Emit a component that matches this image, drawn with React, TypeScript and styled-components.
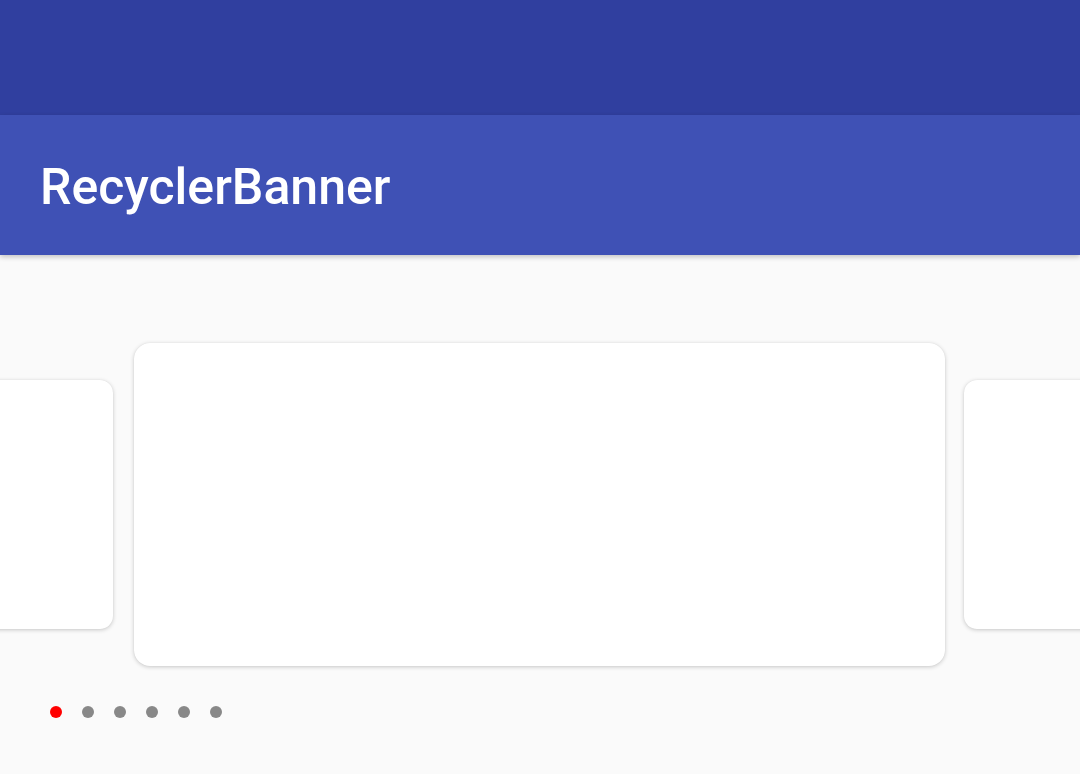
import React from 'react';
import styled, { createGlobalStyle } from 'styled-components';

const GlobalStyle = createGlobalStyle`
    html, body {
        margin: 0;
        padding: 0;
        background: #fafafa;
        font-family: Roboto, "Noto Sans", sans-serif;
    }
`;

const Screen = styled.div`
    display: flex;
    flex-direction: column;
    width: 1080px;
    height: 774px;
    overflow: hidden;
    background: #fafafa;
`;

const StatusBar = styled.div`
    height: 115px;
    background: #303f9f;
    flex-shrink: 0;
`;

const Toolbar = styled.header`
    display: flex;
    align-items: center;
    height: 140px;
    padding: 0 40px;
    background: #3f51b5;
    box-shadow: 0 2px 5px rgba(0, 0, 0, 0.22);
    position: relative;
    z-index: 1;
    flex-shrink: 0;
`;

const Title = styled.h1`
    margin: 4px 0 0;
    color: #ffffff;
    font-family: Roboto, sans-serif;
    font-size: 50px;
    font-weight: 500;
    letter-spacing: 0;
`;

const Content = styled.main`
    display: flex;
    flex-direction: column;
    padding-top: 88px;
`;

const Carousel = styled.div`
    display: flex;
    justify-content: center;
    align-items: center;
    height: 323px;
`;

type Slot = 'prev' | 'current' | 'next';

const Card = styled.div<{ $slot: Slot }>`
    flex-shrink: 0;
    width: ${p => (p.$slot === 'current' ? '811px' : p.$slot === 'prev' ? '622px' : '626px')};
    height: ${p => (p.$slot === 'current' ? '323px' : '249px')};
    margin: ${p => (p.$slot === 'current' ? '0 19px 0 21px' : '0')};
    background: #ffffff;
    border-radius: ${p => (p.$slot === 'current' ? '16px' : '13px')};
    box-shadow: 0 1px 4px rgba(0, 0, 0, 0.2), 0 0 1px rgba(0, 0, 0, 0.08);
`;

const Dots = styled.div`
    display: flex;
    align-items: center;
    gap: 20px;
    margin-top: 40px;
    padding-left: 50px;
`;

const Dot = styled.span<{ $active?: boolean }>`
    width: 12px;
    height: 12px;
    border-radius: 50%;
    background: ${p => (p.$active ? '#ff0000' : '#888888')};
`;

const banners = [0, 1, 2, 3, 4, 5];

export default function App() {
    const current = 0;
    return (
        <Screen>
            <GlobalStyle />
            <StatusBar />
            <Toolbar>
                <Title>RecyclerBanner</Title>
            </Toolbar>
            <Content>
                <Carousel>
                    <Card $slot="prev" />
                    <Card $slot="current" />
                    <Card $slot="next" />
                </Carousel>
                <Dots>
                    {banners.map(i => (
                        <Dot key={i} $active={i === current} />
                    ))}
                </Dots>
            </Content>
        </Screen>
    );
}
